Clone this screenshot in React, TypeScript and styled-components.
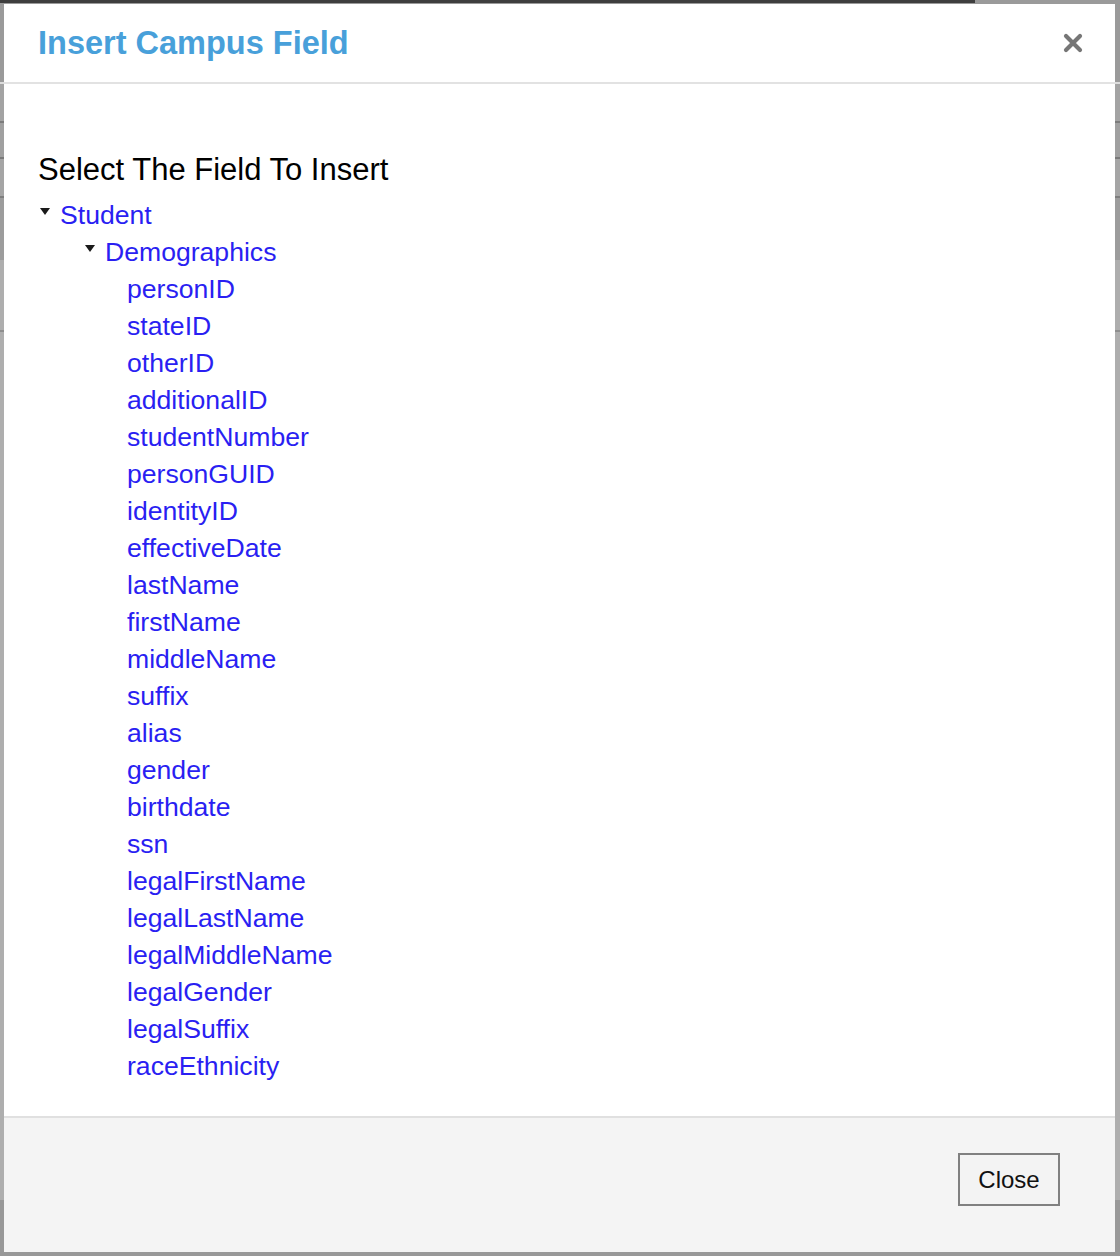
import React from "react";
import styled, { createGlobalStyle } from "styled-components";

// Tree data for the field picker
interface FieldNode {
  label: string;
  children?: FieldNode[];
}

const demographics = [
  "personID",
  "stateID",
  "otherID",
  "additionalID",
  "studentNumber",
  "personGUID",
  "identityID",
  "effectiveDate",
  "lastName",
  "firstName",
  "middleName",
  "suffix",
  "alias",
  "gender",
  "birthdate",
  "ssn",
  "legalFirstName",
  "legalLastName",
  "legalMiddleName",
  "legalGender",
  "legalSuffix",
  "raceEthnicity",
];

const tree: FieldNode[] = [
  {
    label: "Student",
    children: [
      {
        label: "Demographics",
        children: demographics.map((label) => ({ label })),
      },
    ],
  },
];

const GlobalStyle = createGlobalStyle`
  html, body {
    margin: 0;
    padding: 0;
  }
  body {
    font-family: "Liberation Sans", Arial, sans-serif;
  }
`;

// grey overlay with a hint of the page underneath
const Backdrop = styled.div`
  box-sizing: border-box;
  width: 1120px;
  height: 1256px;
  padding: 4px 5px 4px 4px;
  background:
    linear-gradient(#3e3e3e, #3e3e3e) 0 0 / 975px 3px no-repeat,
    linear-gradient(
      to bottom,
      #9a9a9a 0px,
      #9a9a9a 82px,
      #dcdcdc 82px,
      #dcdcdc 84px,
      #a3a3a3 84px,
      #a3a3a3 121px,
      #7c7c7c 121px,
      #7c7c7c 123px,
      #a0a0a0 123px,
      #a0a0a0 157px,
      #7a7a7a 157px,
      #7a7a7a 159px,
      #a5a5a5 159px,
      #a5a5a5 196px,
      #7e7e7e 196px,
      #7e7e7e 198px,
      #9c9c9c 198px,
      #9c9c9c 260px,
      #aeaeae 260px,
      #aeaeae 330px,
      #8e8e8e 330px,
      #8e8e8e 332px,
      #aeaeae 332px,
      #aeaeae 1200px,
      #989898 1200px
    );
`;

const Dialog = styled.div`
  height: 100%;
  background: #ffffff;
  display: flex;
  flex-direction: column;
`;

const Header = styled.div`
  height: 78px;
  flex-shrink: 0;
  display: flex;
  align-items: center;
  justify-content: space-between;
  padding: 0 28px 0 34px;
  border-bottom: 2px solid #e2e2e2;
`;

const Title = styled.h1`
  margin: 0;
  font-size: 32.5px;
  font-weight: bold;
  color: #48a0da;
`;

const CloseIcon = styled.button`
  width: 28px;
  height: 28px;
  padding: 0;
  border: none;
  background: transparent;
  display: flex;
  align-items: center;
  justify-content: center;
  cursor: pointer;
`;

const Body = styled.div`
  flex: 1;
  padding: 66px 34px 0;
`;

const Heading = styled.div`
  font-size: 31px;
  line-height: 40px;
  color: #000;
  margin-bottom: 7px;
`;

const List = styled.ul<{ $indent: number }>`
  list-style: none;
  margin: 0;
  padding: 0 0 0 ${(p) => p.$indent}px;
`;

const Row = styled.div`
  display: flex;
  align-items: center;
  height: 37px;
`;

const Toggle = styled.span`
  width: 20px;
  display: flex;
  align-items: center;
  margin-top: -8px;
`;

const Label = styled.a`
  font-size: 26.6px;
  color: #2a1ff2;
  text-decoration: none;
  cursor: pointer;
`;

const Footer = styled.div`
  height: 136px;
  flex-shrink: 0;
  box-sizing: border-box;
  background: #f4f4f4;
  border-top: 2px solid #e0e0e0;
  display: flex;
  justify-content: flex-end;
  align-items: flex-start;
  padding: 35px 55px 0 0;
`;

const Button = styled.button`
  width: 102px;
  height: 53px;
  background: #f3f3f3;
  border: 2px solid #808080;
  font-family: "Liberation Sans", Arial, sans-serif;
  font-size: 24px;
  color: #111;
  cursor: pointer;
`;

const Caret = () => (
  <svg width="10" height="7" viewBox="0 0 10 7">
    <polygon points="0,0 10,0 5,7" fill="#1a1a1a" />
  </svg>
);

const TreeNode = ({ node, depth }: { node: FieldNode; depth: number }) => (
  <li>
    <Row>
      {node.children && (
        <Toggle>
          <Caret />
        </Toggle>
      )}
      <Label>{node.label}</Label>
    </Row>
    {node.children && (
      <List $indent={depth === 0 ? 45 : 42}>
        {node.children.map((child) => (
          <TreeNode key={child.label} node={child} depth={depth + 1} />
        ))}
      </List>
    )}
  </li>
);

const App = () => (
  <>
    <GlobalStyle />
    <Backdrop>
      <Dialog>
        <Header>
          <Title>Insert Campus Field</Title>
          <CloseIcon aria-label="Close">
            <svg width="20" height="20" viewBox="0 0 20 20">
              <path
                d="M3 3 L17 17 M17 3 L3 17"
                stroke="#767676"
                strokeWidth="4.2"
                strokeLinecap="round"
              />
            </svg>
          </CloseIcon>
        </Header>
        <Body>
          <Heading>Select The Field To Insert</Heading>
          <List $indent={2}>
            {tree.map((node) => (
              <TreeNode key={node.label} node={node} depth={0} />
            ))}
          </List>
        </Body>
        <Footer>
          <Button>Close</Button>
        </Footer>
      </Dialog>
    </Backdrop>
  </>
);

export default App;
